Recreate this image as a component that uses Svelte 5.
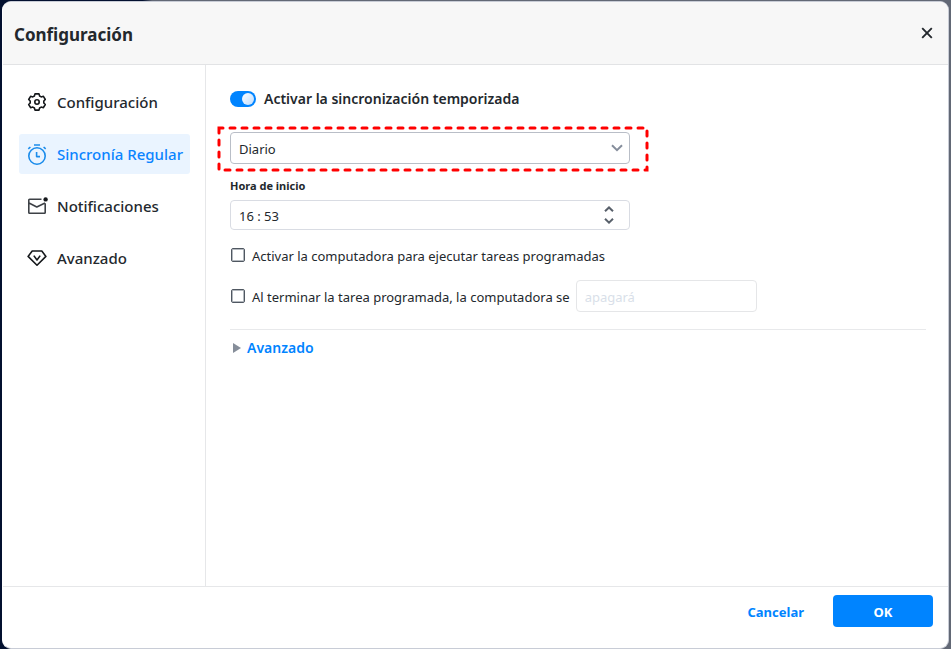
<script>
    const menus = [
        { id: 'config', label: 'Configuración' },
        { id: 'sync', label: 'Sincronía Regular' },
        { id: 'notify', label: 'Notificaciones' },
        { id: 'advanced', label: 'Avanzado' }
    ];

    let current = 'sync';
    let enabled = true;
    let frequency = 'Diario';
    let hour = 16;
    let minute = 53;
    let wakeUp = false;
    let afterTask = false;
    let showAdvanced = false;

    $: startTime = `${hour} : ${String(minute).padStart(2, '0')}`;

    function step(n) {
        const total = (hour * 60 + minute + n + 1440) % 1440;
        hour = Math.floor(total / 60);
        minute = total % 60;
    }
</script>

<div class="dialog" role="dialog" aria-labelledby="dialog-title">
    <header>
        <h1 id="dialog-title">Configuración</h1>
        <button class="close-btn" aria-label="Cerrar">
            <svg width="12" height="12" viewBox="0 0 12 12">
                <path d="M1.2 1.2 10.8 10.8M10.8 1.2 1.2 10.8" fill="none" stroke="#23282d" stroke-width="1.9" />
            </svg>
        </button>
    </header>

    <div class="body">
        <nav>
            {#each menus as menu}
                <button
                    class="menu"
                    class:active={current === menu.id}
                    on:click={() => (current = menu.id)}
                >
                    <svg width="20" height="20" viewBox="0 0 20 20" fill="none" stroke="currentColor" stroke-width="1.6" stroke-linejoin="round">
                        {#if menu.id === 'config'}
                            <path d="M8 1.9h4l.6 2.1 1.6.9 2.2-.6 1.9 3.2L16.8 9v2l1.5 1.5-1.9 3.2-2.2-.6-1.6.9-.6 2.1H8L7.4 16l-1.6-.9-2.2.6-1.9-3.2L3.2 11V9L1.7 7.5l1.9-3.2 2.2.6L7.4 4z" />
                            <circle cx="10" cy="10" r="2.2" />
                        {:else if menu.id === 'sync'}
                            <circle cx="10" cy="12" r="8.2" />
                            <path d="M7 1h6M1.3 4.8 3.4 3M18.7 4.8 16.6 3M9.6 8v4.6H13" />
                        {:else if menu.id === 'notify'}
                            <g stroke="#3d4146">
                                <path d="M14.5 3.3H2.6q-.8 0-.8.8v12.3q0 .8.8.8h14.8q.8 0 .8-.8V7.2M2 7l7.8 4 8.2-4" />
                            </g>
                            <circle cx="18.6" cy="3.4" r="2.2" fill="currentColor" stroke="none" />
                        {:else}
                            <path d="M5.2 3h9.6l4.1 5.4-8.9 8.8-8.9-8.8z" />
                            <path d="M6.8 7.6 10 12l3.2-4.4" />
                        {/if}
                    </svg>
                    {menu.label}
                </button>
            {/each}
        </nav>

        <main>
            <label class="switch">
                <input type="checkbox" role="switch" bind:checked={enabled} />
                Activar la sincronización temporizada
            </label>

            <div class="frequency">
                <select aria-label="Frecuencia" bind:value={frequency}>
                    <option>Diario</option>
                    <option>Semanal</option>
                    <option>Mensual</option>
                </select>
                <svg class="arrow" width="12" height="8" viewBox="0 0 12 8">
                    <path d="M1 1.2 6 6.2 11 1.2" fill="none" stroke="#868e9c" stroke-width="2" />
                </svg>
                <div class="highlight">
                    <svg width="100%" height="100%">
                        <rect width="100%" height="100%" />
                    </svg>
                </div>
            </div>

            <label class="time-label" for="start-time">Hora de inicio</label>
            <div class="time">
                <input id="start-time" type="text" value={startTime} readonly />
                <div class="spinner">
                    <button aria-label="Más" on:click={() => step(1)}>
                        <svg width="10" height="6" viewBox="0 0 10 6">
                            <path d="M1 5.2 5 1.4 9 5.2" />
                        </svg>
                    </button>
                    <button aria-label="Menos" on:click={() => step(-1)}>
                        <svg width="10" height="6" viewBox="0 0 10 6">
                            <path d="M1 .8 5 4.6 9 .8" />
                        </svg>
                    </button>
                </div>
            </div>

            <div class="check-row">
                <label>
                    <input type="checkbox" bind:checked={wakeUp} />
                    <span>Activar la computadora para ejecutar tareas programadas</span>
                </label>
            </div>
            <div class="check-row">
                <label>
                    <input type="checkbox" bind:checked={afterTask} />
                    <span>Al terminar la tarea programada, la computadora se</span>
                </label>
                <input class="action" type="text" aria-label="Acción" value="apagará" disabled={!afterTask} />
            </div>

            <hr />

            <button
                class="more-btn"
                aria-expanded={showAdvanced}
                on:click={() => (showAdvanced = !showAdvanced)}
            >
                <svg width="8" height="10" viewBox="0 0 8 10">
                    <path d="M0 0 8 5 0 10z" fill="#868e9a" />
                </svg>
                Avanzado
            </button>
        </main>
    </div>

    <footer>
        <button class="cancel-btn">Cancelar</button>
        <button class="ok-btn">OK</button>
    </footer>
</div>

<style>
    :global(body) {
        margin: 0;
        padding-top: 1px;
        background: linear-gradient(to right, #03102f 15%, #626875 16%);
    }

    .dialog,
    .dialog * {
        box-sizing: border-box;
    }

    .dialog {
        display: flex;
        flex-direction: column;
        min-height: calc(100vh - 1px);
        margin: 0 2px;
        border: 1px solid #c8ccd6;
        border-left-color: #fff;
        border-radius: 9px;
        background: #fff;
        overflow: hidden;
        color: #23282d;
        font-family: "Noto Sans", "Open Sans", sans-serif;
        font-size: 13px;
        line-height: 20px;
    }

    button,
    input,
    select {
        margin: 0;
        padding: 0;
        border: 0;
        background: none;
        color: inherit;
        font: inherit;
    }

    button {
        cursor: pointer;
    }

    svg {
        display: block;
        flex: none;
        overflow: visible;
    }

    header {
        display: flex;
        align-items: center;
        justify-content: space-between;
        height: 63px;
        padding: 0 15px 0 11px;
        border-bottom: 1px solid #e2e3e5;
        background: #f7f7f7;
    }

    h1 {
        margin: 0;
        padding-top: 4px;
        font-size: 17px;
        line-height: 24px;
        font-weight: 700;
    }

    .body {
        display: flex;
        flex: 1;
    }

    nav {
        display: flex;
        flex-direction: column;
        gap: 12px;
        width: 203px;
        padding: 17px 15px 17px 16px;
        border-right: 1px solid #e6e7e9;
    }

    .menu {
        display: flex;
        align-items: center;
        gap: 10px;
        height: 40px;
        padding: 0 8px;
        border-radius: 3px;
        font-size: 15px;
        font-weight: 500;
        white-space: nowrap;
    }

    .menu svg {
        color: #15181b;
    }

    .menu.active {
        background: #eaf4ff;
        color: #0a84ff;
    }

    .menu.active svg {
        color: #1b8ceb;
    }

    main {
        display: flex;
        flex: 1;
        flex-direction: column;
        align-items: flex-start;
        padding: 24px 22px 24px 24px;
    }

    .switch {
        display: flex;
        align-items: center;
        gap: 8px;
        font-size: 14px;
        font-weight: 600;
    }

    .switch input {
        appearance: none;
        display: flex;
        width: 26px;
        height: 16px;
        padding: 2px;
        border-radius: 8px;
        background: #b8bec8;
    }

    .switch input::before {
        content: '';
        width: 12px;
        height: 12px;
        border-radius: 50%;
        background: linear-gradient(135deg, #fff, #bcdcff);
    }

    .switch input:checked {
        justify-content: flex-end;
        background: #0084ff;
    }

    .frequency {
        position: relative;
        display: flex;
        width: 400px;
        margin-top: 23px;
    }

    .frequency select {
        appearance: none;
        width: 100%;
        height: 32px;
        padding: 2px 30px 0 8px;
        border: 1px solid #b9bec7;
        border-radius: 4px;
    }

    .arrow {
        position: absolute;
        top: 12px;
        right: 7px;
        pointer-events: none;
    }

    .highlight {
        position: absolute;
        inset: -4px -17px -6px -11px;
        pointer-events: none;
    }

    .highlight rect {
        fill: none;
        stroke: #f00;
        stroke-width: 3;
        stroke-linecap: round;
        stroke-dasharray: 5 7;
        stroke-dashoffset: 1;
    }

    .time-label {
        margin: 12px 0 4px;
        font-size: 11px;
        font-weight: 700;
    }

    .time {
        display: flex;
        width: 400px;
        height: 30px;
        padding: 0 15px 0 8px;
        border: 1px solid #d9dce3;
        border-radius: 4px;
    }

    .time input {
        flex: 1;
        min-width: 0;
        padding-top: 2px;
    }

    .spinner {
        display: flex;
        flex-direction: column;
        justify-content: center;
        gap: 6px;
    }

    .spinner path {
        fill: none;
        stroke: #59616b;
        stroke-width: 2;
    }

    .check-row {
        display: flex;
        align-items: center;
        gap: 6px;
        margin-top: 9px;
        min-height: 32px;
    }

    .check-row label {
        display: flex;
        align-items: center;
        gap: 7px;
        padding-left: 1px;
    }

    .check-row span {
        padding-top: 2px;
    }

    .check-row input[type='checkbox'] {
        appearance: none;
        width: 14px;
        height: 14px;
        border: 1px solid #4f5761;
        border-radius: 2px;
        box-shadow: inset 0 0 0 1px #b4b9bf;
    }

    .check-row input[type='checkbox']:checked {
        background: #0084ff;
    }

    .action {
        width: 181px;
        height: 32px;
        padding: 2px 8px 0;
        border: 1px solid #e5e6e8;
        border-radius: 4px;
    }

    .action:disabled {
        color: #d9dfe9;
    }

    hr {
        width: 100%;
        margin: 17px 0 8px;
        border: 0;
        border-top: 1px solid #e8e9eb;
    }

    .more-btn {
        display: flex;
        align-items: center;
        gap: 6px;
        padding-left: 3px;
        color: #0084ff;
        font-size: 14px;
        font-weight: 600;
    }

    footer {
        display: flex;
        align-items: flex-start;
        justify-content: flex-end;
        gap: 29px;
        height: 62px;
        padding: 8px 15px;
        border-top: 1px solid #e6e7e9;
        font-weight: 700;
    }

    footer button {
        height: 32px;
        padding-top: 1px;
    }

    .cancel-btn {
        color: #0084ff;
    }

    .ok-btn {
        width: 100px;
        border-radius: 4px;
        background: #0084ff;
        color: #fff;
    }
</style>
